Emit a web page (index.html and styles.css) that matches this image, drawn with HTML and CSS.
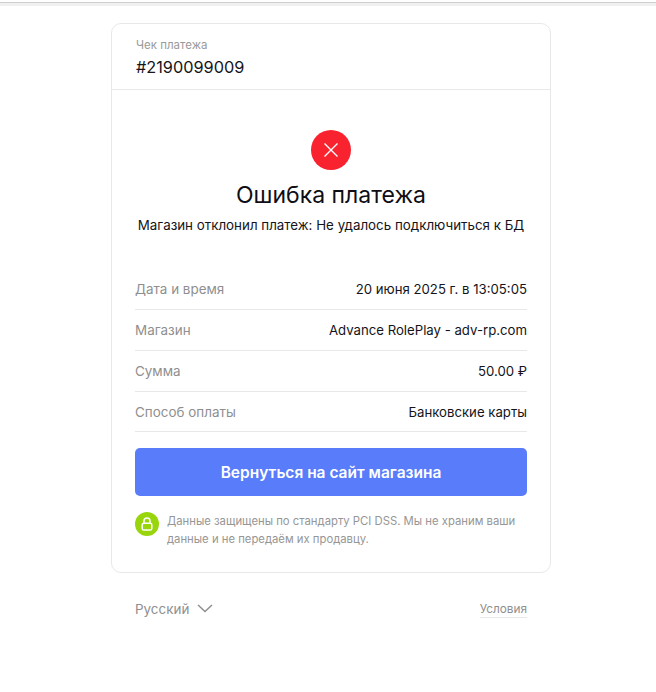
FILE: index.html
```html
<!DOCTYPE html>
<html lang="ru">
<head>
  <meta charset="UTF-8">
  <meta name="viewport" content="width=device-width, initial-scale=1.0">
  <title>Ошибка платежа</title>
  <link rel="stylesheet" href="styles.css">
</head>
<body>
  <div class="topbar"></div>
  <div class="page">
    <div class="card">
      <div class="card-head">
        <div class="head-label">Чек платежа</div>
        <div class="head-number">#2190099009</div>
      </div>
      <div class="card-body">
        <div class="status">
          <div class="status-icon">
            <svg width="16" height="16" viewBox="0 0 16 16">
              <path d="M1.5 1.5L14.5 14.5M14.5 1.5L1.5 14.5" stroke="#fff" stroke-width="1.4" fill="none"/>
            </svg>
          </div>
          <h1 class="status-title">Ошибка платежа</h1>
          <p class="status-text">Магазин отклонил платеж: Не удалось подключиться к БД</p>
        </div>
        <div class="rows">
          <div class="row"><span class="row-label">Дата и время</span><span class="row-value">20 июня 2025 г. в 13:05:05</span></div>
          <div class="row"><span class="row-label">Магазин</span><span class="row-value">Advance RolePlay - adv-rp.com</span></div>
          <div class="row"><span class="row-label">Сумма</span><span class="row-value">50.00 ₽</span></div>
          <div class="row"><span class="row-label">Способ оплаты</span><span class="row-value">Банковские карты</span></div>
        </div>
        <a class="back-btn" href="#">Вернуться на сайт магазина</a>
        <div class="secure">
          <div class="secure-icon">
            <svg width="12" height="14" viewBox="0 0 12 14">
              <path d="M3 6.5V4a3 3 0 0 1 6 0v2.5" stroke="#fff" stroke-width="1.5" fill="none"/>
              <rect x="1.2" y="6.2" width="9.6" height="6.8" rx="1.6" stroke="#fff" stroke-width="1.5" fill="none"/>
            </svg>
          </div>
          <p class="secure-text">Данные защищены по стандарту PCI DSS. Мы не храним ваши данные и не передаём их продавцу.</p>
        </div>
      </div>
    </div>
    <div class="foot">
      <div class="lang">Русский
        <svg width="16" height="9" viewBox="0 0 16 9">
          <path d="M1 1l7 6.5L15 1" stroke="#8f8f8f" stroke-width="1.5" fill="none"/>
        </svg>
      </div>
      <a class="terms" href="#">Условия</a>
    </div>
  </div>
</body>
</html>
```

FILE: styles.css
```css
body {
  margin: 0;
  background: #fff;
  font-family: "Inter", "Noto Sans", sans-serif;
  color: #14141a;
}

.topbar {
  height: 4px;
  margin-top: 2px;
  border-top: 1px solid #cfcfcf;
  background: #f0f0f0;
  box-sizing: border-box;
}

.page {
  width: 440px;
  margin: 17px 0 0 111px;
}

.card {
  border: 1px solid #e8e8ea;
  border-radius: 10px;
  box-sizing: border-box;
  height: 550px;
}

.card-head {
  height: 66px;
  padding: 14px 23px 0 24px;
  box-sizing: border-box;
  border-bottom: 1px solid #e8e8ea;
}

.head-label {
  font-size: 11.5px;
  line-height: 15px;
  color: #9a9a9a;
}

.head-number {
  font-size: 16.3px;
  line-height: 20px;
  margin-top: 4px;
}

.card-body {
  padding: 40px 23px 0;
}

.status {
  display: flex;
  flex-direction: column;
  align-items: center;
}

.status-icon {
  width: 40px;
  height: 40px;
  border-radius: 50%;
  background: #f9222f;
  display: flex;
  align-items: center;
  justify-content: center;
}

.status-title {
  margin: 10px 0 0;
  font-size: 23px;
  line-height: 30px;
  font-weight: 400;
  color: #0e0e14;
}

.status-text {
  margin: 5px 0 0;
  font-size: 13.35px;
  line-height: 20px;
}

.rows {
  margin-top: 34px;
}

.row {
  display: flex;
  justify-content: space-between;
  align-items: center;
  height: 41px;
  box-sizing: border-box;
  border-bottom: 1px solid #e8e8ea;
  font-size: 13.2px;
}

.row:last-child {
  height: 40px;
}

.row-label {
  font-size: 13.45px;
  color: #8f8f8f;
}

.back-btn {
  display: block;
  margin-top: 16px;
  height: 48px;
  line-height: 50px;
  border-radius: 5px;
  background: #587cfa;
  color: #fff;
  text-align: center;
  text-decoration: none;
  font-size: 15.5px;
  font-weight: 600;
}

.secure {
  display: flex;
  gap: 8px;
  margin-top: 16px;
}

.secure-icon {
  flex: none;
  width: 24px;
  height: 24px;
  border-radius: 50%;
  background: #98d50d;
  display: flex;
  align-items: center;
  justify-content: center;
}

.secure-text {
  margin: 0;
  font-size: 11.3px;
  line-height: 18px;
  color: #969696;
}

.foot {
  display: flex;
  justify-content: space-between;
  align-items: center;
  padding: 26px 24px 0;
  color: #8f8f8f;
}

.lang {
  display: flex;
  align-items: center;
  gap: 8px;
  font-size: 13.45px;
}

.terms {
  font-size: 11.8px;
  line-height: 15px;
  padding-top: 3px;
  color: #8f8f8f;
  text-decoration: none;
  border-bottom: 1px solid #e8e8ea;
}
```
